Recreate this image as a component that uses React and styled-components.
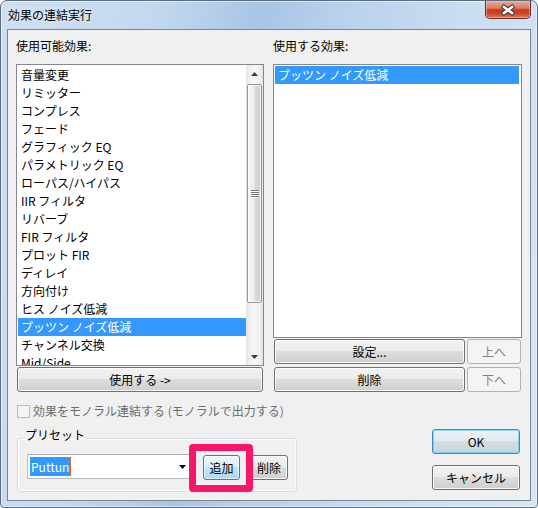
import React from "react";
import styled, { createGlobalStyle } from "styled-components";

const FONT = `"Noto Sans CJK JP", "Noto Sans", sans-serif`;

const AVAILABLE = [
  "音量変更",
  "リミッター",
  "コンプレス",
  "フェード",
  "グラフィック EQ",
  "パラメトリック EQ",
  "ローパス/ハイパス",
  "IIR フィルタ",
  "リバーブ",
  "FIR フィルタ",
  "プロット FIR",
  "ディレイ",
  "方向付け",
  "ヒス ノイズ低減",
  "プッツン ノイズ低減",
  "チャンネル交換",
  "Mid/Side",
];
const SELECTED_AVAILABLE = "プッツン ノイズ低減";
const USED = ["プッツン ノイズ低減"];

const GlobalStyle = createGlobalStyle`
  html, body {
    margin: 0;
    padding: 0;
    background: #ffffff;
  }
  body {
    font-family: ${FONT};
    font-size: 12px;
    color: #000;
  }
  * {
    box-sizing: border-box;
  }
`;

const Window = styled.div`
  width: 538px;
  height: 508px;
  border: 1px solid #5d6c7e;
  border-radius: 7px 7px 4px 4px;
  padding: 0 6px 6px;
  display: flex;
  flex-direction: column;
  overflow: hidden;
  background: linear-gradient(
    100deg,
    #cddff2 0%,
    #c3d8ef 25%,
    #a8c5e6 42%,
    #b9d1ec 55%,
    #cbddf1 75%,
    #d7e6f5 100%
  );
  box-shadow: inset 0 0 0 1px rgba(255, 255, 255, 0.5);
`;

const TitleBar = styled.div`
  height: 28px;
  display: flex;
  justify-content: space-between;
  align-items: flex-start;
`;

const Title = styled.div`
  padding: 6px 0 0 1px;
  line-height: 16px;
  text-shadow: 0 0 6px rgba(255, 255, 255, 0.9);
`;

const CloseButton = styled.div`
  width: 46px;
  height: 18px;
  border: 1px solid #6b2c24;
  border-top: none;
  border-radius: 0 0 5px 5px;
  display: flex;
  align-items: center;
  justify-content: center;
  background: linear-gradient(
    #e9a899 0%,
    #da7c68 42%,
    #c5391f 52%,
    #c9462d 75%,
    #de7b61 100%
  );
  box-shadow: inset 0 0 0 1px rgba(255, 210, 200, 0.45);
`;

const Client = styled.div`
  flex: 1;
  border: 1px solid #7b8693;
  background: #f0f0f0;
  padding: 0 8px;
  display: flex;
  flex-direction: column;
`;

const Columns = styled.div`
  display: grid;
  grid-template-columns: 248px 249px;
  column-gap: 9px;
`;

const Column = styled.div`
  display: flex;
  flex-direction: column;
`;

const Label = styled.div`
  height: 34px;
  padding-top: 8px;
  line-height: 16px;
`;

const ListBox = styled.div`
  height: ${(p) => p.$h}px;
  border: 1px solid #828790;
  background: #fff;
  display: flex;
  overflow: hidden;
`;

const Rows = styled.div`
  flex: 1;
  overflow: hidden;
  padding-top: 1px;
`;

const Row = styled.div`
  height: 18px;
  line-height: 18px;
  padding-left: 3px;
  margin: 0 ${(p) => p.$mr || 0}px 0 1px;
  white-space: nowrap;
  background: ${(p) => (p.$selected ? "#3399ff" : "transparent")};
  color: ${(p) => (p.$selected ? "#fff" : "#000")};
`;

const ScrollBar = styled.div`
  width: 17px;
  display: flex;
  flex-direction: column;
  background: linear-gradient(
    to right,
    #e3e3e3,
    #f0f0f0 18%,
    #f7f7f7 50%,
    #f0f0f0 82%,
    #e3e3e3
  );
`;

const ArrowBox = styled.div`
  height: 17px;
  display: flex;
  align-items: center;
  justify-content: center;
`;

const Track = styled.div`
  flex: 1;
  padding: 2px 1px 0;
`;

const Thumb = styled.div`
  height: 219px;
  border: 1px solid #979797;
  border-radius: 2px;
  display: flex;
  align-items: center;
  justify-content: center;
  background: linear-gradient(
    to right,
    #f7f7f7,
    #ececec 45%,
    #d9d9d9 55%,
    #d0d0d0
  );
  box-shadow: inset 0 0 0 1px rgba(255, 255, 255, 0.7);
`;

const Grip = styled.div`
  width: 8px;
  height: 8px;
  background: repeating-linear-gradient(#767676 0 1px, #fbfbfb 1px 2px);
`;

const Button = styled.button`
  font-family: ${FONT};
  font-size: 12px;
  line-height: 16px;
  height: 25px;
  padding: 0 4px;
  margin: 0;
  border-radius: 3px;
  display: flex;
  align-items: center;
  justify-content: center;
  white-space: nowrap;
  width: ${(p) => (p.$w ? `${p.$w}px` : "auto")};
  flex: ${(p) => (p.$grow ? 1 : "none")};
  ${(p) => VARIANTS[p.$variant || "normal"]}
`;

const VARIANTS = {
  normal: `
    border: 1px solid #707070;
    color: #000;
    background: linear-gradient(#f2f2f2 0%, #ebebeb 49%, #dddddd 50%, #cfcfcf 100%);
    box-shadow: inset 0 0 0 1px rgba(255, 255, 255, 0.85);
  `,
  disabled: `
    border: 1px solid #adb2b5;
    color: #838383;
    background: #f4f4f4;
  `,
  default: `
    border: 1px solid #3c8dc5;
    color: #000;
    background: linear-gradient(#ecf3f7 0%, #e2eaef 49%, #d3dee5 50%, #c8d4dc 100%);
    box-shadow: inset 0 0 0 1px rgba(90, 205, 245, 0.7);
  `,
  hot: `
    border: 1px solid #3c7fb1;
    color: #000;
    background: linear-gradient(#eaf6fd 0%, #d9f0fc 49%, #bee6fd 50%, #a7d9f5 100%);
    box-shadow: inset 0 0 0 1px rgba(255, 255, 255, 0.6);
  `,
};

const WideButton = styled(Button)`
  margin: 1px 1px 0;
`;

const ButtonRow = styled.div`
  display: flex;
  gap: 2px;
  padding: 0 1px;
  margin-top: ${(p) => p.$mt}px;
`;

const Bottom = styled.div`
  display: flex;
  justify-content: space-between;
`;

const BottomLeft = styled.div`
  display: flex;
  flex-direction: column;
  padding-left: 1px;
`;

const CheckRow = styled.div`
  margin-top: 11px;
  height: 16px;
  line-height: 16px;
  display: flex;
  align-items: center;
  gap: 3px;
  color: #6d6d6d;
`;

const CheckBox = styled.span`
  width: 13px;
  height: 13px;
  border: 1px solid #b9b9b9;
  background: #f4f4f4;
`;

const Group = styled.fieldset`
  margin: 8px 0 0;
  width: 280px;
  border: 1px solid #d5dfe5;
  border-radius: 3px;
  padding: 5px 7px 11px 9px;
  box-shadow: inset 0 0 0 1px rgba(255, 255, 255, 0.8);
`;

const Legend = styled.legend`
  padding: 0 2px 6px;
  margin-left: -4px;
  line-height: 16px;
`;

const PresetRow = styled.div`
  display: flex;
  align-items: flex-start;
`;

const Combo = styled.div`
  width: 163px;
  height: 25px;
  border: 1px solid #b5bcc7;
  border-top-color: #abadb3;
  background: #fff;
  display: flex;
  align-items: center;
  padding: 0 3px 0 2px;
`;

const Selection = styled.span`
  height: 19px;
  line-height: 19px;
  padding: 0 1px;
  background: #3399ff;
  color: #fff;
  border-right: 1px solid #d2691e;
`;

const ComboArrow = styled.svg`
  margin-left: auto;
`;

const Highlight = styled.div`
  position: relative;
  margin: 1px 0 0 13px;
  &::before {
    content: "";
    position: absolute;
    left: -14px;
    right: -13px;
    top: -11px;
    bottom: -12px;
    border: 7px solid #f8166a;
    border-radius: 4px;
    pointer-events: none;
    z-index: 1;
  }
`;

const SideButton = styled(Button)`
  margin: 1px 0 0 10px;
`;

const BottomRight = styled.div`
  display: flex;
  flex-direction: column;
  gap: 11px;
  padding-top: 37px;
  margin-right: 2px;
`;

const Triangle = ({ down }) => (
  <svg width="7" height="4" viewBox="0 0 7 4">
    <polygon
      points={down ? "0,0 7,0 3.5,4" : "3.5,0 7,4 0,4"}
      fill="#3a3a3a"
    />
  </svg>
);

const CloseGlyph = () => (
  <svg width="14" height="12" viewBox="0 0 14 12">
    <path d="M3 3 L11 9 M11 3 L3 9" stroke="#3b3b3b" strokeWidth="4.6" strokeLinecap="square" />
    <path d="M3 3 L11 9 M11 3 L3 9" stroke="#ffffff" strokeWidth="2.6" strokeLinecap="square" />
  </svg>
);

export default function App() {
  return (
    <>
      <GlobalStyle />
      <Window>
        <TitleBar>
          <Title>効果の連結実行</Title>
          <CloseButton>
            <CloseGlyph />
          </CloseButton>
        </TitleBar>
        <Client>
          <Columns>
            <Column>
              <Label>使用可能効果:</Label>
              <ListBox $h={302}>
                <Rows>
                  {AVAILABLE.map((name) => (
                    <Row key={name} $selected={name === SELECTED_AVAILABLE}>
                      {name}
                    </Row>
                  ))}
                </Rows>
                <ScrollBar>
                  <ArrowBox>
                    <Triangle />
                  </ArrowBox>
                  <Track>
                    <Thumb>
                      <Grip />
                    </Thumb>
                  </Track>
                  <ArrowBox>
                    <Triangle down />
                  </ArrowBox>
                </ScrollBar>
              </ListBox>
              <WideButton>使用する -&gt;</WideButton>
            </Column>
            <Column>
              <Label>使用する効果:</Label>
              <ListBox $h={274}>
                <Rows>
                  {USED.map((name) => (
                    <Row key={name} $selected $mr={2}>
                      {name}
                    </Row>
                  ))}
                </Rows>
              </ListBox>
              <ButtonRow $mt={1}>
                <Button $grow>設定...</Button>
                <Button $variant="disabled" $w={54}>
                  上へ
                </Button>
              </ButtonRow>
              <ButtonRow $mt={3}>
                <Button $grow>削除</Button>
                <Button $variant="disabled" $w={54}>
                  下へ
                </Button>
              </ButtonRow>
            </Column>
          </Columns>
          <Bottom>
            <BottomLeft>
              <CheckRow>
                <CheckBox />
                効果をモノラル連結する (モノラルで出力する)
              </CheckRow>
              <Group>
                <Legend>プリセット</Legend>
                <PresetRow>
                  <Combo>
                    <Selection>Puttun</Selection>
                    <ComboArrow width="7" height="4" viewBox="0 0 7 4">
                      <polygon points="0,0 7,0 3.5,4" fill="#000" />
                    </ComboArrow>
                  </Combo>
                  <Highlight>
                    <Button $variant="hot" $w={37}>
                      追加
                    </Button>
                  </Highlight>
                  <SideButton $w={38}>削除</SideButton>
                </PresetRow>
              </Group>
            </BottomLeft>
            <BottomRight>
              <Button $variant="default" $w={88}>
                OK
              </Button>
              <Button $w={88}>キャンセル</Button>
            </BottomRight>
          </Bottom>
        </Client>
      </Window>
    </>
  );
}
